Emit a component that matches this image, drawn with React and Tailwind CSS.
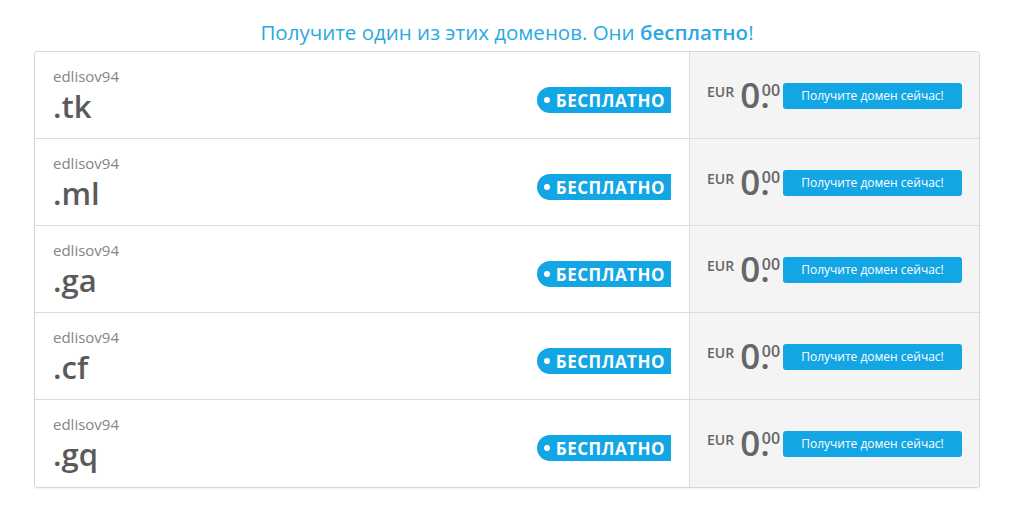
import React from "react";

const domains = [".tk", ".ml", ".ga", ".cf", ".gq"];

const DomainRow = ({ tld, last }) => (
  <div className={`flex h-[87px] ${last ? "" : "border-b border-[#dcdcdc]"}`}>
    {/* Left cell */}
    <div className="flex flex-1 items-start justify-between pl-[18px] pr-[18px] pt-[14px]">
      <div className="flex flex-col">
        <span className="text-[15px] leading-[20px] text-[#858585]">edlisov94</span>
        <span className="mt-[1px] text-[31px] font-semibold leading-[38px] text-[#5a5a5a]">{tld}</span>
      </div>
      <div className="mt-[21px] flex h-[26px] items-center rounded-l-full rounded-r-[3px] bg-[#13a6e4] pl-[7px] pr-[6px] text-white">
        <span className="mr-[6px] h-[6px] w-[6px] rounded-full bg-white" />
        <span className="text-[17px] font-bold leading-none tracking-[0.5px]">БЕСПЛАТНО</span>
      </div>
    </div>
    {/* Right cell */}
    <div className="flex w-[290px] items-start border-l border-[#dcdcdc] bg-[#f4f4f4] pl-[17px] pr-[17px] pt-[31px]">
      <div className="flex items-start text-[#666]">
        <span className="mt-[1px] text-[14px] font-semibold leading-[16px]">EUR</span>
        <span className="ml-[6px] -mt-[10px] text-[35px] font-semibold leading-[44px]">0.</span>
        <span className="-ml-[8px] text-[16px] font-semibold leading-[14px]">00</span>
      </div>
      <button className="ml-auto h-[26px] w-[179px] rounded-[3px] bg-[#13a6e4] text-[12px] leading-none text-white">
        Получите домен сейчас!
      </button>
    </div>
  </div>
);

export default function App() {
  return (
    <div className="min-h-[517px] bg-white font-['Open_Sans',sans-serif]">
      <div className="ml-[34px] w-[946px] pt-[19px]">
        <h1 className="text-center text-[20.5px] leading-[26px] text-[#29a9e3]">
          Получите один из этих доменов. Они <span className="font-semibold">бесплатно</span>!
        </h1>
        <div className="mt-[6px] overflow-hidden rounded-[3px] border border-[#d6d6d6] shadow-[0_1px_2px_rgba(0,0,0,0.06)]">
          {domains.map((d, i) => (
            <DomainRow key={d} tld={d} last={i === domains.length - 1} />
          ))}
        </div>
      </div>
    </div>
  );
}
